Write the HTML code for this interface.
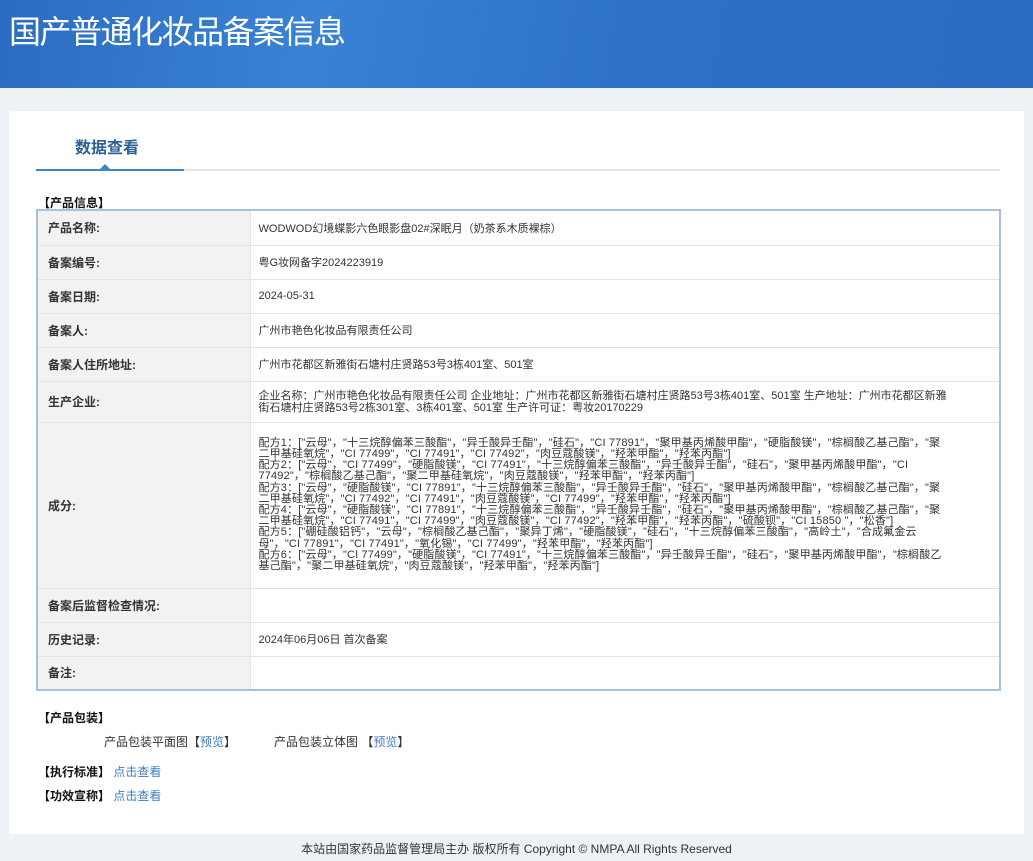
<!DOCTYPE html>
<html><head><meta charset="utf-8"><style>
*{margin:0;padding:0;box-sizing:border-box}
body{width:1033px;height:861px;background:#eef2f6;font-family:"Liberation Sans","Noto Sans CJK SC",sans-serif;font-size:12px;color:#333;position:relative;overflow:hidden}
.hd{position:absolute;left:0;top:0;width:1033px;height:88px;background:linear-gradient(100deg,#2a6cc0 0%,#3a82d4 30%,#2d72c8 60%,#2a6cc0 100%)}
.hd h1{position:absolute;left:9px;top:7px;font-size:32px;font-weight:normal;color:#fff;font-family:"Noto Sans CJK SC",sans-serif;letter-spacing:-1.5px}
.panel{position:absolute;left:9px;top:111px;width:1015px;height:723px;background:#fff}
.tab{position:absolute;left:75px;top:134px;font-size:16px;font-weight:bold;color:#2a5f98}
.tl{position:absolute;left:36px;top:169px;width:964px;height:2px;background:#e6e6e6}
.tl2{position:absolute;left:36px;top:169px;width:148px;height:2px;background:#3a86c8}
.tri{position:absolute;left:100px;top:164px;width:0;height:0;border-left:5px solid transparent;border-right:5px solid transparent;border-bottom:5px solid #3a86c8}
.sec{position:absolute;font-weight:bold;color:#111;font-size:12px}
table{position:absolute;left:36px;top:209px;width:965px;border-collapse:collapse;border:2px solid #a9c1da}
td{border:1px solid #e3e3e3;padding:0 50px 0 8px;font-size:11px;color:#333}
td.l{width:213px;background:#f2f2f2;font-weight:bold;font-size:12px;color:#333;padding:0 10px}
.ing{line-height:11.2px;font-size:11px;letter-spacing:0.15px}
.a{color:#3f7cc0}
.foot{position:absolute;left:0;width:1033px;top:840px;text-align:center;font-size:12px;color:#333}
</style></head><body>
<div class="hd"><h1>国产普通化妆品备案信息</h1></div>
<div class="panel"></div>
<div class="tab">数据查看</div>
<div class="tl"></div><div class="tl2"></div><div class="tri"></div>
<div class="sec" style="left:38px;top:194px">【产品信息】</div>
<table>
<tr style="height:35px"><td class="l">产品名称:</td><td>WODWOD幻境蝶影六色眼影盘02#深眠月（奶茶系木质裸棕）</td></tr>
<tr style="height:34px"><td class="l">备案编号:</td><td>粤G妆网备字2024223919</td></tr>
<tr style="height:34px"><td class="l">备案日期:</td><td>2024-05-31</td></tr>
<tr style="height:34px"><td class="l">备案人:</td><td>广州市艳色化妆品有限责任公司</td></tr>
<tr style="height:34px"><td class="l">备案人住所地址:</td><td>广州市花都区新雅街石塘村庄贤路53号3栋401室、501室</td></tr>
<tr style="height:41px"><td class="l">生产企业:</td><td style="line-height:12px">企业名称：广州市艳色化妆品有限责任公司 企业地址：广州市花都区新雅街石塘村庄贤路53号3栋401室、501室 生产地址：广州市花都区新雅街石塘村庄贤路53号2栋301室、3栋401室、501室 生产许可证：粤妆20170229</td></tr>
<tr style="height:166px"><td class="l">成分:</td><td class="ing">配方1：["云母"，"十三烷醇偏苯三酸酯"，"异壬酸异壬酯"，"硅石"，"CI 77891"，"聚甲基丙烯酸甲酯"，"硬脂酸镁"，"棕榈酸乙基己酯"，"聚二甲基硅氧烷"，"CI 77499"，"CI 77491"，"CI 77492"，"肉豆蔻酸镁"，"羟苯甲酯"，"羟苯丙酯"]<br>配方2：["云母"，"CI 77499"，"硬脂酸镁"，"CI 77491"，"十三烷醇偏苯三酸酯"，"异壬酸异壬酯"，"硅石"，"聚甲基丙烯酸甲酯"，"CI 77492"，"棕榈酸乙基己酯"，"聚二甲基硅氧烷"，"肉豆蔻酸镁"，"羟苯甲酯"，"羟苯丙酯"]<br>配方3：["云母"，"硬脂酸镁"，"CI 77891"，"十三烷醇偏苯三酸酯"，"异壬酸异壬酯"，"硅石"，"聚甲基丙烯酸甲酯"，"棕榈酸乙基己酯"，"聚二甲基硅氧烷"，"CI 77492"，"CI 77491"，"肉豆蔻酸镁"，"CI 77499"，"羟苯甲酯"，"羟苯丙酯"]<br>配方4：["云母"，"硬脂酸镁"，"CI 77891"，"十三烷醇偏苯三酸酯"，"异壬酸异壬酯"，"硅石"，"聚甲基丙烯酸甲酯"，"棕榈酸乙基己酯"，"聚二甲基硅氧烷"，"CI 77491"，"CI 77499"，"肉豆蔻酸镁"，"CI 77492"，"羟苯甲酯"，"羟苯丙酯"，"硫酸钡"，"CI 15850 "，"松香"]<br>配方5：["硼硅酸铝钙"，"云母"，"棕榈酸乙基己酯"，"聚异丁烯"，"硬脂酸镁"，"硅石"，"十三烷醇偏苯三酸酯"，"高岭土"，"合成氟金云母"，"CI 77891"，"CI 77491"，"氧化锡"，"CI 77499"，"羟苯甲酯"，"羟苯丙酯"]<br>配方6：["云母"，"CI 77499"，"硬脂酸镁"，"CI 77491"，"十三烷醇偏苯三酸酯"，"异壬酸异壬酯"，"硅石"，"聚甲基丙烯酸甲酯"，"棕榈酸乙基己酯"，"聚二甲基硅氧烷"，"肉豆蔻酸镁"，"羟苯甲酯"，"羟苯丙酯"]</td></tr>
<tr style="height:34px"><td class="l">备案后监督检查情况:</td><td></td></tr>
<tr style="height:34px"><td class="l">历史记录:</td><td>2024年06月06日 首次备案</td></tr>
<tr style="height:34px"><td class="l">备注:</td><td></td></tr>
</table>
<div class="sec" style="left:38px;top:709px">【产品包装】</div>
<div style="position:absolute;left:104px;top:733px">产品包装平面图【<span class="a">预览</span>】</div>
<div style="position:absolute;left:274px;top:733px">产品包装立体图 【<span class="a">预览</span>】</div>
<div style="position:absolute;left:38px;top:763px"><b style="color:#111">【执行标准】</b> <span class="a">点击查看</span></div>
<div style="position:absolute;left:38px;top:787px"><b style="color:#111">【功效宣称】</b> <span class="a">点击查看</span></div>
<div class="foot">本站由国家药品监督管理局主办 版权所有 Copyright © NMPA All Rights Reserved</div>
</body></html>
